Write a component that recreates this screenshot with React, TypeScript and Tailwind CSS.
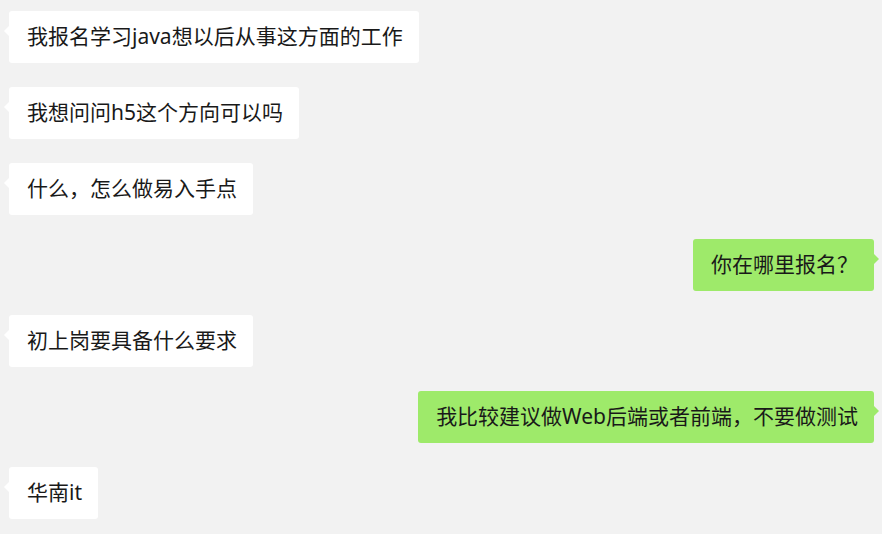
const messages: { text: string; self?: boolean }[] = [
  { text: "我报名学习java想以后从事这方面的工作" },
  { text: "我想问问h5这个方向可以吗" },
  { text: "什么，怎么做易入手点" },
  { text: "你在哪里报名？", self: true },
  { text: "初上岗要具备什么要求" },
  { text: "我比较建议做Web后端或者前端，不要做测试", self: true },
  { text: "华南it" },
];

function Bubble({ text, self }: { text: string; self?: boolean }) {
  return (
    <div className={self ? "flex justify-end" : "flex justify-start"}>
      <div
        className={
          "relative rounded-[3px] pl-[18px] pr-[16px] pt-[9px] pb-[11px] text-[21px] leading-[32px] text-[#191919] " +
          (self ? "bg-[#9eea6a]" : "bg-white")
        }
      >
        {self ? (
          <span className="absolute right-[-5px] top-[15px] h-0 w-0 border-y-[5px] border-l-[5px] border-y-transparent border-l-[#9eea6a]" />
        ) : (
          <span className="absolute left-[-5px] top-[15px] h-0 w-0 border-y-[5px] border-r-[5px] border-y-transparent border-r-white" />
        )}
        {text}
      </div>
    </div>
  );
}

export default function App() {
  return (
    <div
      className="h-[534px] w-[882px] overflow-hidden bg-[#f2f2f2] pl-[9px] pr-[8px] pt-[11px]"
      style={{ fontFamily: '"Noto Sans", "Noto Sans CJK SC", sans-serif' }}
    >
      <div className="flex flex-col gap-[24px]">
        {messages.map((m, i) => (
          <Bubble key={i} text={m.text} self={m.self} />
        ))}
      </div>
    </div>
  );
}
